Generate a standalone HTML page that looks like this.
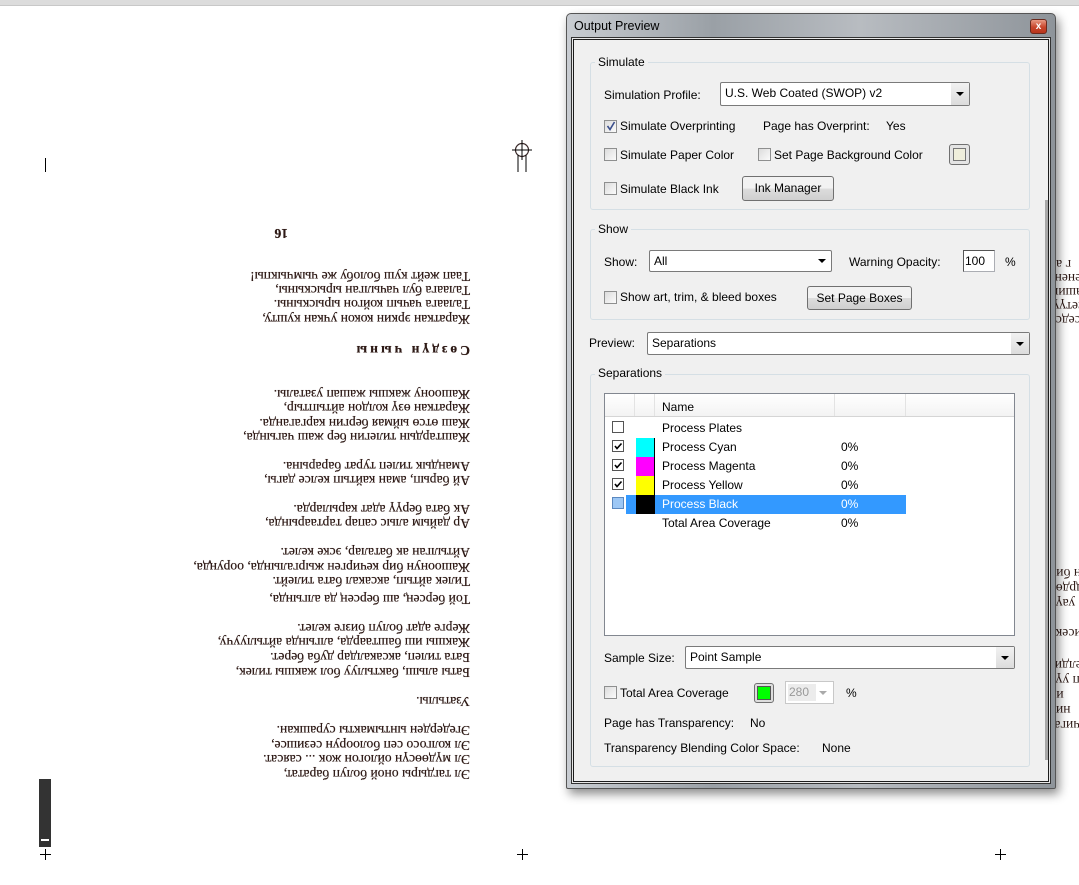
<!DOCTYPE html>
<html><head><meta charset="utf-8">
<style>
*{margin:0;padding:0;box-sizing:border-box}
body{width:1079px;height:885px;background:#fff;position:relative;overflow:hidden;font-family:"Liberation Sans",sans-serif;font-size:12px;color:#000}
.a{position:absolute;white-space:nowrap}
.pg{position:absolute;left:180px;top:220px;width:290px;height:570px;transform:rotate(180deg);font-family:"Liberation Serif",serif;font-size:13.6px;color:#2e1a16;text-shadow:0 0 0.4px #2e1a16}
.pg div{position:absolute;left:0;white-space:nowrap;line-height:14px}
.rf{position:absolute;left:1049px;width:40px;height:14px;overflow:hidden;font-family:"Liberation Serif",serif;font-size:13.6px;color:#2e1a16;line-height:14px;transform:rotate(180deg);text-align:right}
.t{line-height:14px;height:14px}
.grp{position:absolute;border:1px solid #d5dfe5;border-radius:3px}
.gl{position:absolute;background:#f0f0f0;padding:0 3px;line-height:14px}
.cb{position:absolute;width:13px;height:13px;border:1px solid #8e8f8f;background:linear-gradient(135deg,#dcdcdc,#fbfbfb)}
.dd{position:absolute;background:#fff;border:1px solid #7a7a7a;border-radius:2px;padding-left:4px}
.dd:after{content:"";position:absolute;right:5px;top:50%;margin-top:-2px;border-left:4px solid transparent;border-right:4px solid transparent;border-top:4px solid #000}
.dd .ar{position:absolute;right:0;top:0;bottom:0;width:18px;background:linear-gradient(#f2f2f2,#dcdcdc)}
.btn{position:absolute;border:1px solid #707070;border-radius:3px;background:linear-gradient(#f2f2f2 50%,#dddddd 50%,#cfcfcf);text-align:center}
.hd{position:absolute;top:1px;height:22px;border-right:1px solid #e3e3e3;background:linear-gradient(#fff,#f3f3f3)}
</style></head><body>
<div class="a" style="left:0;top:0;width:1079px;height:6px;background:#dcdcdc;border-bottom:1px solid #c8c8c8"></div>

<div class="a" style="left:45px;top:158px;width:1px;height:14px;background:#000"></div>
<svg class="a" style="left:510px;top:138px" width="26" height="36"><circle cx="12" cy="12" r="6.5" fill="none" stroke="#3a2a2a" stroke-width="1.2"/><path d="M2 12H22M12 2V22M8 17V34M16 17V34" stroke="#000" stroke-width="1"/></svg>
<div class="a" style="left:39px;top:779px;width:12px;height:68px;background:#333"></div>
<div class="a" style="left:41px;top:839px;width:8px;height:2px;background:#fff"></div>
<svg class="a" style="left:40px;top:849px" width="11" height="11"><path d="M5.5 0V11M0 5.5H11" stroke="#000"/></svg>
<svg class="a" style="left:517px;top:849px" width="11" height="11"><path d="M5.5 0V11M0 5.5H11" stroke="#000"/></svg>
<svg class="a" style="left:995px;top:849px" width="11" height="11"><path d="M5.5 0V11M0 5.5H11" stroke="#000"/></svg>

<div class="pg">
<div style="top:550px;left:182px;font-weight:bold">16</div>
<div style="top:507px">Таап жейт куш болобу же чымчыкпы!</div>
<div style="top:493px">Талаага бул чачылган ырыскыны,</div>
<div style="top:479px">Талаага чачып койгон ырыскыны.</div>
<div style="top:464px">Жараткан эркин кокон учкан кушту,</div>
<div style="top:433px;font-weight:bold;letter-spacing:3px">Сөздүн чыны</div>
<div style="top:389px">Жашоону жакшы жашап узаталы.</div>
<div style="top:375px">Жараткан өзү колдон айтыптыр,</div>
<div style="top:360px">Жаш өтсө ыймая бергин каргаганда.</div>
<div style="top:346px">Жаштардын тилегин бер жаш чагында,</div>
<div style="top:317px">Амандык тилеп турат барарына.</div>
<div style="top:303px">Ай барып, аман кайтып келсе дагы,</div>
<div style="top:274px">Ак бата берүү адат карыларда.</div>
<div style="top:260px">Ар дайым алыс сапар тартаарында,</div>
<div style="top:231px">Айтылган ак баталар, эске келет.</div>
<div style="top:216px">Жашоонун бир кечирген жыргалында, ооруңда,</div>
<div style="top:202px">Тилек айтып, аксакал бата тилейт.</div>
<div style="top:184px">Той берсең, аш берсең да алгында,</div>
<div style="top:155px">Жерге адат болуп бизге келет.</div>
<div style="top:141px">Жакшы иш баштаарда, алгында айтылуучу,</div>
<div style="top:126px">Бата тилеп, аксакалдар дуба берет.</div>
<div style="top:111px">Баты алыш, бактылуу бол жакшы тилек,</div>
<div style="top:82px">Узатылы.</div>
<div style="top:53px">Эгедерден ынтымакты сурашкан.</div>
<div style="top:38px">Эл колгосо сеп болоорун сезишсе,</div>
<div style="top:24px">Эл мүдөөсүн ойлогон жок ... саясат.</div>
<div style="top:9px">Эл тагдыры оной болуп баратат,</div>
</div>

<div class="rf" style="top:257px">г  ап</div>
<div class="rf" style="top:271px">кененг</div>
<div class="rf" style="top:285px">дашиин</div>
<div class="rf" style="top:299px">сетүү,</div>
<div class="rf" style="top:313px">седсө</div>
<div class="rf" style="top:566px">н бип</div>
<div class="rf" style="top:581px">дрдөө</div>
<div class="rf" style="top:596px">уаүү</div>
<div class="rf" style="top:611px">а</div>
<div class="rf" style="top:626px">иисекк</div>
<div class="rf" style="top:658px">нелдиш</div>
<div class="rf" style="top:673px">ап уүк</div>
<div class="rf" style="top:688px">ип</div>
<div class="rf" style="top:703px">ниб</div>
<div class="rf" style="top:718px">тчигаз</div>

<!-- dialog -->
<div class="a" style="left:566px;top:13px;width:490px;height:776px;border:1px solid #555;border-radius:5px 5px 2px 2px;background:linear-gradient(90deg,#c9cdd2,#9aa0a6 30%,#b8bcc1 60%,#8e949a);box-shadow:3px 5px 10px rgba(0,0,0,.45)"></div>
<div class="a" style="left:574px;top:19px;font-size:12.5px;line-height:15px">Output Preview</div>
<div class="a" style="left:1030px;top:19px;width:17px;height:15px;border:1px solid #6b2a1e;border-radius:3px;background:linear-gradient(#e89a84,#c8452b 55%,#b8351c);color:#fff;font-size:10px;line-height:13px;text-align:center;font-weight:bold">x</div>
<div class="a" style="left:573px;top:39px;width:476px;height:743px;background:#f0f0f0;border:1px solid #1c1c1c;box-shadow:0 0 0 1px #e8e8e8,0 0 0 2px #333"></div>
<div class="a" style="left:1045px;top:200px;width:3px;height:560px;background:#a8a8a8"></div>

<!-- Simulate -->
<div class="grp" style="left:590px;top:62px;width:440px;height:148px"></div>
<div class="gl" style="left:595px;top:55px">Simulate</div>
<div class="a t" style="left:604px;top:88px">Simulation Profile:</div>
<div class="dd" style="left:720px;top:82px;width:250px;height:24px;line-height:21px"><div class="ar"></div><span style="position:relative">U.S. Web Coated (SWOP) v2</span></div>
<div class="cb" style="left:604px;top:120px"></div><svg class="a" style="left:605px;top:120px" width="12" height="12"><path d="M2.5 6L5 9.5 9.5 2" stroke="#3b4f8c" stroke-width="1.6" fill="none"/></svg>
<div class="a t" style="left:620px;top:119px">Simulate Overprinting</div>
<div class="a t" style="left:763px;top:119px">Page has Overprint:</div>
<div class="a t" style="left:886px;top:119px">Yes</div>
<div class="cb" style="left:604px;top:148px"></div><div class="a t" style="left:620px;top:148px">Simulate Paper Color</div>
<div class="cb" style="left:758px;top:148px"></div><div class="a t" style="left:774px;top:148px">Set Page Background Color</div>
<div class="a" style="left:949px;top:144px;width:21px;height:21px;border:1px solid #707070;border-radius:3px;background:#e4e4e4"><div style="margin:3px;width:13px;height:13px;border:1px solid #777;background:#efeedb"></div></div>
<div class="cb" style="left:604px;top:182px"></div><div class="a t" style="left:620px;top:182px">Simulate Black Ink</div>
<div class="btn" style="left:742px;top:176px;width:92px;height:25px;line-height:23px">Ink Manager</div>

<!-- Show -->
<div class="grp" style="left:590px;top:229px;width:440px;height:91px"></div>
<div class="gl" style="left:595px;top:222px">Show</div>
<div class="a t" style="left:604px;top:255px">Show:</div>
<div class="dd" style="left:649px;top:250px;width:183px;height:22px;line-height:20px"><span>All</span></div>
<div class="a t" style="left:849px;top:255px">Warning Opacity:</div>
<div class="a" style="left:963px;top:250px;width:32px;height:22px;background:#fff;border:1px solid #abadb3;border-top-color:#555;border-left-color:#555;line-height:20px;padding-left:1px">100</div>
<div class="a t" style="left:1005px;top:255px">%</div>
<div class="cb" style="left:604px;top:291px"></div><div class="a t" style="left:620px;top:290px">Show art, trim, &amp; bleed boxes</div>
<div class="btn" style="left:807px;top:286px;width:105px;height:24px;line-height:22px">Set Page Boxes</div>

<div class="a t" style="left:589px;top:336px">Preview:</div>
<div class="dd" style="left:647px;top:332px;width:383px;height:23px;line-height:20px"><div class="ar"></div><span style="position:relative">Separations</span></div>

<!-- Separations -->
<div class="grp" style="left:590px;top:374px;width:440px;height:393px"></div>
<div class="gl" style="left:595px;top:366px">Separations</div>
<div class="a" style="left:604px;top:393px;width:411px;height:243px;background:#fff;border:1px solid #828790"></div>
<div class="hd" style="left:605px;top:394px;width:30px"></div>
<div class="hd" style="left:635px;top:394px;width:20px"></div>
<div class="hd" style="left:655px;top:394px;width:180px"></div>
<div class="hd" style="left:835px;top:394px;width:71px"></div>
<div class="hd" style="left:906px;top:394px;width:108px;border-right:none"></div>
<div class="a" style="left:605px;top:416px;width:409px;height:1px;background:#d5d5d5"></div>
<div class="a t" style="left:662px;top:400px">Name</div>

<div class="a" style="left:626px;top:495px;width:280px;height:19px;background:#3399ff"></div>
<div class="a" style="left:612px;top:421px;width:12px;height:12px;border:1px solid #555;background:#fff"></div>
<div class="a" style="left:612px;top:440px;width:12px;height:12px;border:1px solid #555;background:#fff"></div>
<div class="a" style="left:612px;top:459px;width:12px;height:12px;border:1px solid #555;background:#fff"></div>
<div class="a" style="left:612px;top:478px;width:12px;height:12px;border:1px solid #555;background:#fff"></div>
<div class="a" style="left:612px;top:497px;width:12px;height:12px;border:1px solid #5a88c0;background:#9cc7f5"></div>
<svg class="a" style="left:612px;top:440px" width="12" height="50"><path d="M3 6L5 8.5 9.5 3.5M3 25L5 27.5 9.5 22.5M3 44L5 46.5 9.5 41.5" stroke="#000" stroke-width="1.6" fill="none"/></svg>
<div class="a" style="left:636px;top:438px;width:19px;height:19px;background:#00ffff;border-right:1px solid #000"></div>
<div class="a" style="left:636px;top:457px;width:19px;height:19px;background:#ff00ff;border-right:1px solid #000"></div>
<div class="a" style="left:636px;top:476px;width:19px;height:19px;background:#ffff00;border-right:1px solid #000"></div>
<div class="a" style="left:636px;top:495px;width:19px;height:19px;background:#000"></div>
<div class="a t" style="left:662px;top:421px">Process Plates</div>
<div class="a t" style="left:662px;top:440px">Process Cyan</div><div class="a t" style="left:841px;top:440px">0%</div>
<div class="a t" style="left:662px;top:459px">Process Magenta</div><div class="a t" style="left:841px;top:459px">0%</div>
<div class="a t" style="left:662px;top:478px">Process Yellow</div><div class="a t" style="left:841px;top:478px">0%</div>
<div class="a t" style="left:662px;top:497px;color:#fff">Process Black</div><div class="a t" style="left:841px;top:497px;color:#fff">0%</div>
<div class="a t" style="left:662px;top:516px">Total Area Coverage</div><div class="a t" style="left:841px;top:516px">0%</div>

<div class="a t" style="left:604px;top:651px">Sample Size:</div>
<div class="dd" style="left:685px;top:646px;width:330px;height:23px;line-height:20px"><div class="ar"></div><span style="position:relative">Point Sample</span></div>
<div class="cb" style="left:604px;top:686px"></div><div class="a t" style="left:620px;top:686px">Total Area Coverage</div>
<div class="a" style="left:754px;top:683px;width:20px;height:20px;border:1px solid #707070;border-radius:3px;background:#ddd"><div style="margin:2px;width:14px;height:14px;border:1px solid #555;background:#00ff00"></div></div>
<div class="a" style="left:785px;top:681px;width:49px;height:23px;border:1px solid #c8c8c8;background:#fff"><div style="position:absolute;left:2px;top:2px;width:28px;height:17px;background:#ececec;color:#999;line-height:17px;padding-left:1px">280</div><div style="position:absolute;right:6px;top:9px;border-left:4px solid transparent;border-right:4px solid transparent;border-top:4px solid #aaa"></div></div>
<div class="a t" style="left:846px;top:686px">%</div>
<div class="a t" style="left:604px;top:716px">Page has Transparency:</div>
<div class="a t" style="left:750px;top:716px">No</div>
<div class="a t" style="left:604px;top:741px">Transparency Blending Color Space:</div>
<div class="a t" style="left:822px;top:741px">None</div>
</body></html>
